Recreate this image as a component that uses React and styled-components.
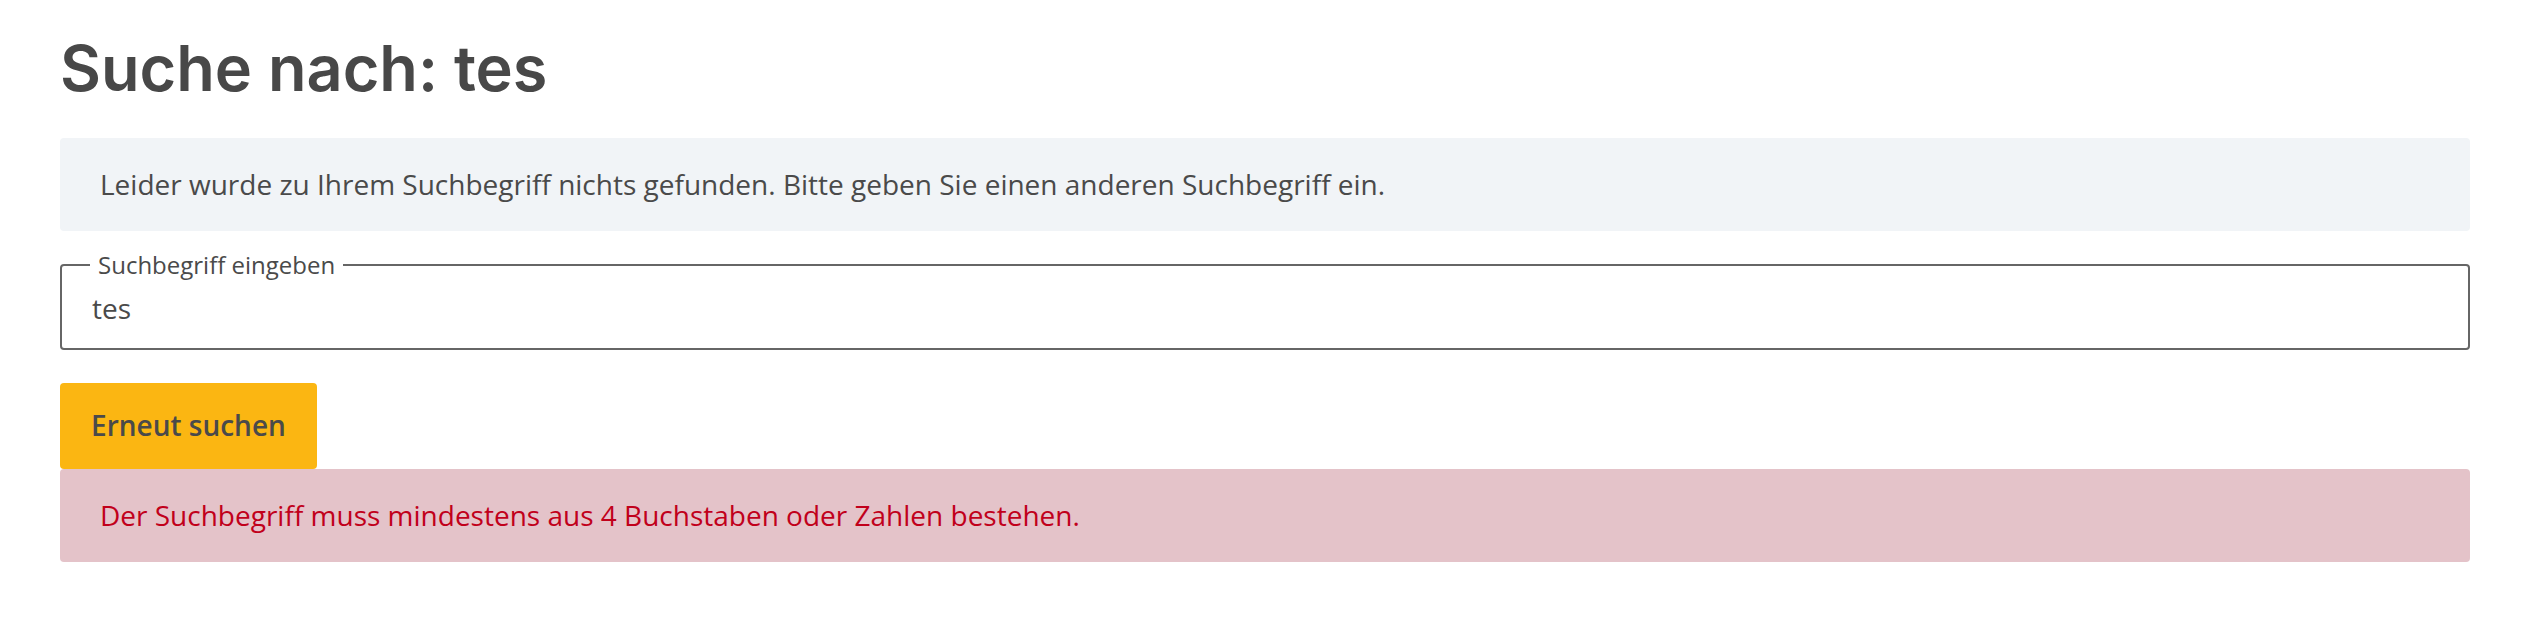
import React, { useState } from 'react';
import styled, { createGlobalStyle } from 'styled-components';

const GlobalStyle = createGlobalStyle`
  html, body {
    margin: 0;
    padding: 0;
    background: #fff;
  }
  body {
    font-family: 'Open Sans', 'Noto Sans', sans-serif;
    color: #4a4a4a;
  }
`;

const MIN_LENGTH = 4;

const App = () => {
  const [term, setTerm] = useState('tes');

  return (
    <>
      <GlobalStyle />
      <StyledPage>
        <StyledHeading>Suche nach: tes</StyledHeading>

        <StyledNotice $variant="info">
          Leider wurde zu Ihrem Suchbegriff nichts gefunden. Bitte geben Sie einen anderen
          Suchbegriff ein.
        </StyledNotice>

        <form onSubmit={(e) => e.preventDefault()} autoComplete="off">
          <StyledFieldset>
            <StyledLegend>Suchbegriff eingeben</StyledLegend>
            <StyledInput
              type="text"
              name="q"
              value={term}
              onChange={(e) => setTerm(e.target.value)}
            />
          </StyledFieldset>

          <StyledButton type="submit">Erneut suchen</StyledButton>
        </form>

        {term.length < MIN_LENGTH && (
          <StyledNotice $variant="error">
            Der Suchbegriff muss mindestens aus 4 Buchstaben oder Zahlen bestehen.
          </StyledNotice>
        )}
      </StyledPage>
    </>
  );
};

const StyledPage = styled('main')({
  padding: '31px 76px 40px 60px',
  display: 'flex',
  flexDirection: 'column'
});

const StyledHeading = styled('h1')({
  margin: '0 0 33px',
  fontFamily: "Inter, 'Noto Sans', sans-serif",
  fontWeight: 600,
  fontSize: '63px',
  lineHeight: '74px',
  color: '#484848'
});

const noticeColors = {
  info: { bg: '#f1f4f7', fg: '#4a4a4a' },
  error: { bg: '#e4c3c9', fg: '#c1001b' }
};

const StyledNotice = styled('p')((props) => ({
  margin: 0,
  padding: '27px 40px',
  borderRadius: '4px',
  fontSize: '28px',
  lineHeight: '39px',
  backgroundColor: noticeColors[props.$variant].bg,
  color: noticeColors[props.$variant].fg
}));

const StyledFieldset = styled('fieldset')({
  margin: '17px 0 0',
  padding: '0 28px',
  border: '2px solid #666',
  borderRadius: '4px',
  minWidth: 0
});

const StyledLegend = styled('legend')({
  padding: '0 8px',
  fontSize: '24px',
  lineHeight: '34.5px',
  color: '#4a4a4a'
});

const StyledInput = styled('input')({
  display: 'block',
  width: '100%',
  boxSizing: 'border-box',
  margin: 0,
  padding: '7px 2px 22px',
  border: 'none',
  outline: 'none',
  background: 'transparent',
  fontFamily: "'Open Sans', sans-serif",
  fontSize: '28px',
  lineHeight: '36px',
  color: '#4a4a4a'
});

const StyledButton = styled('button')({
  display: 'block',
  marginTop: '33px',
  padding: '23.5px 31px',
  border: 'none',
  borderRadius: '4px',
  backgroundColor: '#fbb612',
  fontFamily: "'Open Sans', sans-serif",
  fontWeight: 600,
  fontSize: '28px',
  lineHeight: '39px',
  color: '#4a4a4a',
  cursor: 'pointer',
  '&:hover': {
    filter: 'brightness(0.95)'
  }
});

export default App;
